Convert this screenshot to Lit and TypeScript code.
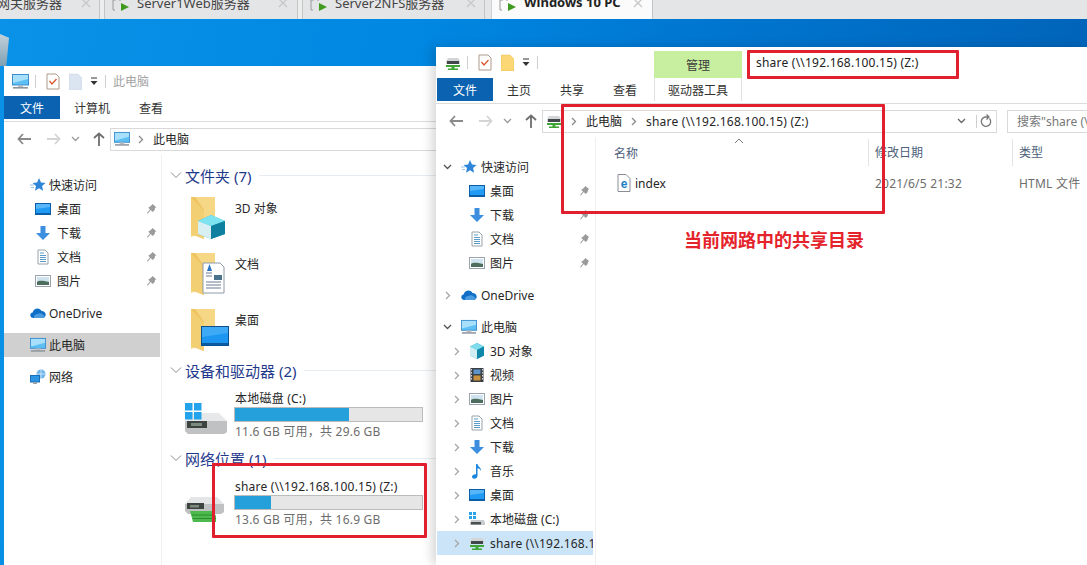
import { LitElement, html, css, svg, nothing } from "lit";
import { customElement } from "lit/decorators.js";

const ic = (w: number, h: number, body: unknown, vb = `0 0 ${w} ${h}`) =>
  html`<svg class="ico" width=${w} height=${h} viewBox=${vb}>${body}</svg>`;

const pc = (s = 17) => ic(s, s, svg`
  <rect x="0.5" y="1.5" width="16" height="10.5" fill="#5cc0f5" stroke="#3f8fcf"/>
  <path d="M1 2h15v4L1 10z" fill="#a8e0fb"/>
  <rect x="6" y="12" width="5" height="2" fill="#b5bcc4"/>
  <rect x="1" y="14" width="15" height="1.6" fill="#8d959d"/>`, "0 0 17 17");

const desk = () => ic(16, 16, svg`
  <rect x="0.5" y="2.5" width="15" height="11" fill="#1f9bf3" stroke="#0a5ea8"/>
  <rect x="1" y="12" width="14" height="1.5" fill="#0b5fa8"/>
  <path d="M1 3h14v3L1 8z" fill="#57b6f8"/>`);

const down = () => ic(16, 16, svg`<path d="M5.5 1h5v7H15l-7 7-7-7h4.500z" fill="#3d8ede"/>`);

const doc = () => ic(16, 16, svg`
  <path d="M3 1h7l3 3v11H3z" fill="#fff" stroke="#98a2ac"/>
  <path d="M5 4h4M5 6.500h6M5 8.500h6M5 10.500h6M5 12.500h6" stroke="#5a9bc9" stroke-width="1"/>`);

const pics = () => ic(16, 16, svg`
  <rect x="0.500" y="2.500" width="15" height="11" fill="#fff" stroke="#9aa3ab"/>
  <rect x="2" y="4" width="12" height="8" fill="#cfe3ee"/>
  <path d="M2 9c3-2 6-1 12 0v3H2z" fill="#4d6d5e"/>`);

const star = () => ic(16, 16, svg`
  <path d="M9 1l2 4.600 4.500.4-3.400 3 1 4.700L9 11.200 5 13.700l1-4.700-3.400-3 4.500-.4z" fill="#2f86d8"/>
  <path d="M0 8h4M1 10.500h3" stroke="#9cc4e6"/>`);

const cloud = () => ic(16, 16, svg`
  <path d="M3.500 13C1.500 13 .3 11.700.3 10.200c0-1.500 1-2.500 2.300-2.700C3.300 5 5.300 3.500 7.500 3.500c1.800 0 3.300 1 4 2.600 2.300 0 4.200 1.600 4.200 3.700 0 1.800-1.300 3.200-3.200 3.200z" fill="#0f6fc6"/>
  <path d="M4 13c-.5-2 1-4 3.500-4 1.500-1.500 5-1 6 1.200l1.500 1c-.5 1.100-1.500 1.800-3 1.800z" fill="#4a9be0"/>`);

const net = () => ic(16, 16, svg`
  <circle cx="11" cy="5" r="4.500" fill="#6fb4e8"/>
  <path d="M7 5h8M11 .5v9" stroke="#d8ecfa" stroke-width=".8"/>
  <rect x=".5" y="6.500" width="9" height="6.500" fill="#2c96e6" stroke="#1d6fb5"/>
  <rect x="3" y="13" width="4" height="2" fill="#9aa3ab"/>`);

const cube = () => ic(16, 16, svg`
  <path d="M8 0l7 3.500v9L8 16l-7-3.500v-9z" fill="#21a9c4"/>
  <path d="M8 0l7 3.500L8 7 1 3.500z" fill="#7fdcec"/>
  <path d="M1 3.500L8 7v9l-7-3.500z" fill="#cfeef3"/>
  <path d="M15 3.500V12.500L8 16V7z" fill="#0f87a8"/>`);

const video = () => ic(16, 16, svg`
  <rect x="1.500" y="1" width="13" height="14" fill="#3a3f45"/>
  <rect x="4.500" y="2.500" width="7" height="4.500" fill="#5c93c9"/>
  <rect x="4.500" y="8.500" width="7" height="5" fill="#c9913e"/>
  <path d="M2.500 2v12M13.500 2v12" stroke="#d8d8d8" stroke-dasharray="1.500 1.500"/>`);

const music = () => ic(16, 16, svg`
  <path d="M7 1h1.500c.3 3 4 3.500 3.500 7-.5-1.500-2-2.500-3.500-2.700V13c0 1.500-1.500 2.700-3.200 2.700C4 15.700 3 15 3 13.800 3 12.300 5 11 7 11.300z" fill="#1b86dd"/>`);

const smallDisk = () => ic(16, 16, svg`
  <rect x="0" y="1" width="3" height="3" fill="#2aa3e8"/><rect x="4" y="1" width="3" height="3" fill="#2aa3e8"/>
  <rect x="0" y="5" width="3" height="3" fill="#2aa3e8"/><rect x="4" y="5" width="3" height="3" fill="#2aa3e8"/>
  <path d="M2 9h13l1 3v2H1v-2z" fill="#c9ccce"/>
  <rect x="2" y="11" width="10" height="2.500" fill="#4a4f4f"/>`);

const smallNet = () => ic(16, 16, svg`
  <path d="M3 3h10l2 3v3H1V6z" fill="#d3d5d6"/>
  <rect x="2" y="6" width="12" height="3" fill="#41474a"/>
  <path d="M1 10h14v2H9.500v1.500H13V15H3v-1.500h3.500V12H1z" fill="#3fa535"/>`);

const pin = () => ic(10, 12, svg`
  <path d="M5.500 1l3.700 3.300-1.200.6-.4 2.400L5.500 9 3.800 7.100.8 10.500 0 10l3-3.500-1.800-1.800 2-1.100.8-.8z" fill="#9b9b9b"/>`);

const folderBack = svg`
  <path d="M1 0h24v32L1 40z" fill="#f6d785"/>
  <path d="M1 0h4l9 13v29L1 37z" fill="#eec25e"/>
  <path d="M1 37l13 5V14L1 0z" fill="#f3cf73"/>`;

const folder3d = () => ic(36, 42, svg`${folderBack}
  <path d="M21 18l14 6v13l-14 5-13-5V24z" fill="#2cb5ce"/>
  <path d="M21 18l14 6-14 5-13-5z" fill="#7ee3f0"/>
  <path d="M8 24l13 5v13L8 37z" fill="#d7eff2"/>
  <path d="M21 29l14-5v13l-14 5z" fill="#0f7f9f"/>`);

const folderDoc = () => ic(36, 42, svg`${folderBack}
  <path d="M13 10h17l4 4v26H13z" fill="#fff" stroke="#8d9aa7"/>
  <path d="M16 20h6M16 23h6M16 29h15M16 32h15M16 35h15" stroke="#6a7d90"/>
  <path d="M17 18l2.500-7 2.500 7z" fill="#2a73c7"/>
  <rect x="24" y="22" width="8" height="5" fill="#49738a"/>`);

const folderDesk = () => ic(40, 42, svg`${folderBack}
  <rect x="11.500" y="17.500" width="27" height="19" fill="#1c96f1" stroke="#0c4f8c"/>
  <path d="M12 18h26v6l-26 4z" fill="#3eaaf6"/>
  <rect x="12" y="34" width="26" height="2.500" fill="#0b5aa0"/>`);

const driveC = () => ic(44, 33, svg`
  <path d="M9 10h26l8 8v11l-3 2H4l-3-3V18z" fill="#e6e8e9"/>
  <path d="M1 18h42v11l-3 2H4l-3-3z" fill="#bfc1c2"/>
  <rect x="3" y="18" width="20" height="7" fill="#3d4440"/>
  <rect x="7" y="20" width="11" height="3" fill="#7c8a80"/>
  <rect x="1" y="0" width="7.500" height="7.500" fill="#23a3ec"/><rect x="10" y="0" width="7.500" height="7.500" fill="#23a3ec"/>
  <rect x="1" y="9" width="7.500" height="7.500" fill="#23a3ec"/><rect x="10" y="9" width="7.500" height="7.500" fill="#23a3ec"/>`);

const driveZ = () => ic(44, 30, svg`
  <path d="M7 2h26l7 7v8l-3 2H4l-3-3V9z" fill="#e3e5e6"/>
  <path d="M1 9h39v8l-3 2H4l-3-3z" fill="#bfc1c2"/>
  <rect x="3" y="8" width="17" height="6" fill="#3d4440"/>
  <rect x="6" y="10" width="9" height="2.500" fill="#7c8a80"/>
  <path d="M6 16h23l3 5v6H9z" fill="#4cba4c"/>
  <path d="M8 20h23M9 23.500h23" stroke="#2f8d2f"/>`);

const arrowL = (c = "#8a8a8a") => ic(14, 12, svg`<path d="M6 1L1.500 6 6 11M2 6h12" fill="none" stroke=${c} stroke-width="1.800"/>`);
const arrowR = (c = "#d4d4d4") => ic(14, 12, svg`<path d="M8 1l4.500 5L8 11M12 6H0" fill="none" stroke=${c} stroke-width="1.800"/>`);
const arrowU = () => ic(12, 14, svg`<path d="M1 6l5-4.500L11 6M6 2v12" fill="none" stroke="#6e6e6e" stroke-width="1.800"/>`);
const chevD = (c = "#8a8a8a") => ic(9, 6, svg`<path d="M1 1l3.500 3.500L8 1" fill="none" stroke=${c} stroke-width="1.300"/>`);
const chevD2 = () => ic(12, 8, svg`<path d="M1 1.500l5 5 5-5" fill="none" stroke="#8a8f96" stroke-width="1"/>`);
const chevR = (c = "#a6a6a6") => ic(6, 9, svg`<path d="M1 1l3.500 3.500L1 8" fill="none" stroke=${c} stroke-width="1.300"/>`);
const chevU = () => ic(10, 6, svg`<path d="M1 5l4-4 4 4" fill="none" stroke="#7b7b7b"/>`);
const qatDrop = () => ic(8, 9, svg`<path d="M1 1h6" stroke="#333"/><path d="M0.500 4h7L4 8z" fill="#333"/>`);
const check = () => ic(14, 17, svg`
  <path d="M1 1h9l3 3v12H1z" fill="#fff" stroke="#b09a8a"/>
  <path d="M3.500 8l2.500 3 4.500-5" fill="none" stroke="#d9552b" stroke-width="1.300"/>`);
const blank = (c: string, e: string) => ic(13, 17, svg`<path d="M0 1h9l4 4v12H0z" fill=${c} stroke=${e} stroke-width=".5"/>`);
const refresh = () => ic(12, 14, svg`<path d="M9.500 4.500A4.700 4.700 0 1 1 5 3h3M6.500.5L9 3 6.500 5.500" fill="none" stroke="#777" stroke-width="1.300"/>`);
const ieFile = () => ic(14, 18, svg`
  <path d="M1 .5h8l4 4v13H1z" fill="#fff" stroke="#8a8f96"/>
  <text x="7" y="13.500" text-anchor="middle" class="ie">e</text>`);
const tabPlay = () => ic(18, 12, svg`
  <path d="M4 0H1v10h2M7 0h2" fill="none" stroke="#9a9a9a"/>
  <path d="M9 3l8 4-8 4z" fill="#3f9a1f"/>`);
const closeX = (c = "#c9c9c9") => ic(10, 10, svg`<path d="M1 1l8 8M9 1L1 9" stroke=${c} stroke-width="1.400"/>`);

interface Row { ch?: "d" | "r"; icon: () => unknown; label: string; pin?: boolean; sub?: boolean; gap?: boolean; sel?: boolean; }

const quick = (ch: boolean): Row[] => [
  { ch: ch ? "d" : undefined, icon: star, label: "快速访问" },
  { icon: desk, label: "桌面", pin: true, sub: true },
  { icon: down, label: "下载", pin: true, sub: true },
  { icon: doc, label: "文档", pin: true, sub: true },
  { icon: pics, label: "图片", pin: true, sub: true },
];

const leftRows: Row[] = [
  ...quick(false),
  { icon: cloud, label: "OneDrive", gap: true },
  { icon: () => pc(16), label: "此电脑", gap: true, sel: true },
  { icon: net, label: "网络", gap: true },
];

const rightRows: Row[] = [
  ...quick(true),
  { ch: "r", icon: cloud, label: "OneDrive", gap: true },
  { ch: "d", icon: () => pc(16), label: "此电脑", gap: true },
  { ch: "r", icon: cube, label: "3D 对象", sub: true },
  { ch: "r", icon: video, label: "视频", sub: true },
  { ch: "r", icon: pics, label: "图片", sub: true },
  { ch: "r", icon: doc, label: "文档", sub: true },
  { ch: "r", icon: down, label: "下载", sub: true },
  { ch: "r", icon: music, label: "音乐", sub: true },
  { ch: "r", icon: desk, label: "桌面", sub: true },
  { ch: "r", icon: smallDisk, label: "本地磁盘 (C:)", sub: true },
  { ch: "r", icon: smallNet, label: "share (\\\\192.168.100.15) (Z:)", sub: true, sel: true },
];

@customElement("app-root")
export class AppRoot extends LitElement {
  static styles = css`
    :host { display: block; width: 1087px; height: 565px; font-family: "Noto Sans", "Noto Sans CJK SC", sans-serif; font-size: 12px; color: #262626; }
    .page { position: relative; width: 1087px; height: 565px; overflow: hidden; display: flex; flex-direction: column; background: #fff; }
    .ico { display: block; flex: none; }
    .ie { font: 700 12px "Liberation Sans", sans-serif; fill: #1c80c8; }
    .ls { letter-spacing: .22px; }

    .tabs { height: 19px; flex: none; background: #e4e5e7; display: flex; overflow: hidden; }
    .tab { height: 19px; display: flex; align-items: center; box-sizing: border-box; border-right: 1px solid #c4c4c4; font-size: 13px; color: #444; flex: none; position: relative; }
    .tab .t { margin-top: -15px; white-space: nowrap; }
    .tab .x { position: absolute; top: -2px; }
    .tab .p { margin: -8px 7px 0 7px; }
    .tab.first { width: 100px; }
    .tab.first .t { margin-left: -3px; }
    .sep { width: 5px; flex: none; background: #eceded; border-right: 1px solid #c4c4c4; box-sizing: border-box; }
    .tab.t2 { width: 193px; }
    .tab.t3 { width: 182px; }
    .tab.act { width: 162px; margin-left: 6px; background: #fbfbfb; font-weight: 700; color: #222; border-left: 1px solid #d0d0d0; }

    .desktop { flex: 1; position: relative; background: linear-gradient(100deg, #0a92e8 0%, #0088e2 35%, #0076d0 60%, #0060b4 100%); }
    .bin { position: absolute; left: 0; top: 15px; width: 9px; height: 32px; background: linear-gradient(#c3d2da, #7fa0b4); clip-path: polygon(0 0, 100% 12%, 70% 100%, 0 100%); }

    .win { position: absolute; background: #fff; display: flex; flex-direction: column; }
    .w1 { left: 4px; top: 47px; width: 432px; height: 499px; }
    .w2 { left: 436px; top: 28px; width: 651px; height: 518px; box-shadow: -4px 0 10px rgba(0,0,0,.16); }

    .title { display: flex; align-items: center; flex: none; position: relative; }
    .w1 .title { height: 30px; }
    .w2 .title { height: 31px; }
    .q { display: flex; align-items: center; }
    .w1 .q { padding-left: 8px; }
    .w2 .q { padding-left: 9px; }
    .bar { width: 1px; height: 13px; background: #cfcfcf; margin: 0 10px 0 6px; }
    .bar.e { margin: 0 0 0 7px; }
    .dropq { margin-left: 8px; }
    .blankq { margin-left: 9px; }
    .wt { margin-left: 7px; color: #a3a3a3; }
    .manage { align-self: flex-end; margin-left: 116px; width: 88px; height: 27px; background: #c8efa0; display: flex; align-items: center; justify-content: center; color: #3c3c3c; }
    .st { margin-left: 14px; margin-top: -1px; color: #222; }

    .rib { display: flex; height: 23px; flex: none; align-items: stretch; }
    .file { width: 56px; background: #0a62b0; color: #fff; display: flex; align-items: center; justify-content: center; margin-right: 14px; }
    .w2 .file { margin-left: 1px; }
    .rt { display: flex; align-items: center; margin-right: 29px; color: #333; }
    .dt { display: flex; align-items: center; justify-content: center; width: 88px; margin-left: -12px; color: #333; border-left: 1px solid #e1e1e1; border-right: 1px solid #e1e1e1; box-sizing: border-box; }
    .line { height: 3px; flex: none; border-bottom: 1px solid #dcdcdc; box-sizing: border-box; }

    .tool { height: 33px; flex: none; display: flex; align-items: center; box-sizing: border-box; padding-top: 1px; }
    .nb { display: flex; justify-content: center; align-items: center; flex: none; }
    .nb.a { width: 40px; } .nb.b { width: 20px; } .nb.c { width: 23px; } .nb.d { width: 23px; }
    .addr { flex: 1; min-width: 0; height: 23px; border: 1px solid #d9d9d9; display: flex; align-items: center; box-sizing: border-box; padding-left: 3px; white-space: nowrap; border-right: 0; }
    .w2 .addr { flex: none; width: 455px; border-right: 1px solid #d9d9d9; padding-right: 4px; }
    .w1 .addr > svg:nth-child(2) { margin: 0 9px 0 8px; }
    .crumbs { display: flex; align-items: center; gap: 9px; flex: 1; min-width: 0; }
    .ctl { display: flex; align-items: center; gap: 3px; flex: none; }
    .search { flex: 1; height: 23px; margin-left: 10px; border: 1px solid #d9d9d9; border-right: 0; display: flex; align-items: center; padding-left: 9px; color: #777; box-sizing: border-box; overflow: hidden; white-space: nowrap; }

    .body { flex: 1; display: flex; min-height: 0; }
    .side { flex: none; padding-top: 18px; box-sizing: border-box; border-right: 1px solid #f0f0f0; }
    .w1 .side { width: 158px; }
    .w2 .side { width: 160px; }
    .row { height: 24px; display: flex; align-items: center; position: relative; white-space: nowrap; overflow: hidden; }
    .row.gap { margin-top: 8px; }
    .row.sel { background: #d0d0d0; }
    .w1 .row { width: 156px; }
    .w2 .row { width: 156px; margin-left: 1px; }
    .w2 .row.gap { margin-top: 8px; }
    .w2 .row.sel { background: #cce4f7; letter-spacing: .22px; }
    .row .chev { flex: none; width: 11px; display: flex; justify-content: center; }
    .w1 .row .ri { margin-left: 26px; margin-right: 3px; }
    .w1 .row.sub .ri { margin-left: 31px; margin-right: 6px; }
    .w2 .row .chev { margin-left: 5px; }
    .w2 .row .ri { margin-left: 8px; margin-right: 4px; }
    .w2 .row.sub .chev { margin-left: 14px; }
    .w2 .row.sub .ri { margin-left: 7px; margin-right: 5px; }
    .row .rp { position: absolute; right: 3px; top: 6px; }

    .main { flex: 1; min-width: 0; padding-top: 8px; padding-left: 8px; }
    .gh { height: 24px; display: flex; align-items: center; color: #1f3a8c; font-size: 15px; }
    .gh .gc { margin-right: 2px; width: 13px; display: flex; }
    .gh .gl { flex: 1; height: 1px; background: #e6ecf2; margin-left: 8px; }
    .fos { margin: 2px 0 1px; }
    .fo { height: 56px; display: flex; box-sizing: border-box; padding: 8px 0 0 20px; }
    .fo .fi { width: 45px; flex: none; }
    .fo .ft { margin-top: 2px; }
    .dr { height: 64px; display: flex; padding-left: 14px; box-sizing: border-box; }
    .dr .di { width: 50px; flex: none; padding-top: 21px; }
    .dr .di.z { padding-top: 25px; }
    .dr .dc { width: 189px; padding-top: 8px; }
    .dr .dn { height: 17px; line-height: 17px; white-space: nowrap; padding-left: 1px; }
    .meter { height: 15px; background: #e6e6e6; border: 1px solid #bcbcbc; box-sizing: border-box; margin-top: 0; }
    .meter div { height: 100%; background: #26a0da; }
    .ds { height: 17px; line-height: 17px; margin-top: 1px; color: #6d6d6d; white-space: nowrap; padding-left: 1px; }

    .list { flex: 1; min-width: 0; padding-top: 2px; position: relative; }
    .heads { height: 27px; display: flex; align-items: center; color: #4c607a; position: relative; }
    .hc { box-sizing: border-box; flex: none; }
    .c1 { width: 272px; padding-left: 18px; }
    .c2 { width: 144px; padding-left: 6px; border-left: 1px solid #e4e4e4; height: 27px; line-height: 27px; }
    .c3 { padding-left: 6px; border-left: 1px solid #e4e4e4; height: 27px; line-height: 27px; width: 75px; }
    .sort { position: absolute; left: 138px; top: -1px; }
    .fr { height: 24px; margin-top: 5px; display: flex; align-items: center; color: #555; }
    .fr .c1 { display: flex; align-items: center; gap: 4px; color: #262626; padding-left: 21px; }
    .fr .c2, .fr .c3 { border: 0; height: auto; line-height: normal; }
    .fr .c2 { padding-left: 7px; color: #6d6d6d; }
    .fr .c3 { padding-left: 7px; color: #6d6d6d; white-space: nowrap; }

    .ann { position: absolute; box-sizing: border-box; border: 3px solid #e0202f; border-radius: 1px; }
    .a1 { left: 747px; top: 50px; width: 212px; height: 29px; }
    .a2 { left: 561px; top: 104px; width: 324px; height: 110px; }
    .a3 { left: 212px; top: 463px; width: 215px; height: 75px; }
    .note { position: absolute; left: 684px; top: 227px; font: 700 18px/24px "Noto Sans CJK SC", sans-serif; color: #e4232b; white-space: nowrap; }
  `;

  private rows(list: Row[]) {
    return list.map(r => html`
      <div class="row ${r.gap ? "gap" : ""} ${r.sub ? "sub" : ""} ${r.sel ? "sel" : ""}">
        ${r.ch ? html`<span class="chev">${r.ch === "d" ? chevD("#555") : chevR()}</span>` : nothing}
        ${r.ch === undefined && list === rightRows ? html`<span class="chev"></span>` : nothing}
        <span class="ri">${r.icon()}</span><span>${r.label}</span>
        ${r.pin ? html`<span class="rp">${pin()}</span>` : nothing}
      </div>`);
  }

  private nav() {
    return html`
      <span class="nb a">${arrowL()}</span><span class="nb b">${arrowR()}</span>
      <span class="nb c">${chevD("#9a9a9a")}</span><span class="nb d">${arrowU()}</span>`;
  }

  private leftWindow() {
    const head = (t: string) => html`<div class="gh"><span class="gc">${chevD2()}</span><span>${t}</span><span class="gl"></span></div>`;
    const fo = (i: unknown, t: string) => html`<div class="fo"><span class="fi">${i}</span><span class="ft">${t}</span></div>`;
    const dr = (i: unknown, n: string, pct: number, s: string, z = false) => html`
      <div class="dr"><span class="di ${z ? "z" : ""}">${i}</span>
        <div class="dc"><div class="dn ls">${n}</div>
          <div class="meter"><div style="width:${pct}%"></div></div>
          <div class="ds ls">${s}</div></div></div>`;
    return html`
      <section class="win w1">
        <div class="title"><div class="q">${pc()}<span class="bar"></span>${check()}<span class="blankq">${blank("#dbe5f1", "#c8d4e2")}</span><span class="dropq">${qatDrop()}</span><span class="bar e"></span></div><span class="wt">此电脑</span></div>
        <div class="rib"><span class="file">文件</span><span class="rt">计算机</span><span class="rt">查看</span></div>
        <div class="line"></div>
        <div class="tool">${this.nav()}<div class="addr">${pc(16)}${chevR("#8a8a8a")}<span>此电脑</span></div></div>
        <div class="body">
          <div class="side">${this.rows(leftRows)}</div>
          <div class="main">
            ${head("文件夹 (7)")}
            <div class="fos">${fo(folder3d(), "3D 对象")}${fo(folderDoc(), "文档")}${fo(folderDesk(), "桌面")}</div>
            ${head("设备和驱动器 (2)")}
            ${dr(driveC(), "本地磁盘 (C:)", 61, "11.6 GB 可用，共 29.6 GB")}
            ${head("网络位置 (1)")}
            ${dr(driveZ(), "share (\\\\192.168.100.15) (Z:)", 19, "13.6 GB 可用，共 16.9 GB", true)}
          </div>
        </div>
      </section>`;
  }

  private rightWindow() {
    return html`
      <section class="win w2">
        <div class="title"><div class="q">${smallNet()}<span class="bar"></span>${check()}<span class="blankq">${blank("#fbd873", "#e6bd55")}</span><span class="dropq">${qatDrop()}</span><span class="bar e"></span></div><span class="manage">管理</span><span class="st ls">share (\\\\192.168.100.15) (Z:)</span></div>
        <div class="rib"><span class="file">文件</span><span class="rt">主页</span><span class="rt">共享</span><span class="rt">查看</span><span class="dt">驱动器工具</span></div>
        <div class="line"></div>
        <div class="tool">${this.nav()}
          <div class="addr"><div class="crumbs">${smallNet()}${chevR("#8a8a8a")}<span>此电脑</span>${chevR("#8a8a8a")}<span class="ls">share (\\\\192.168.100.15) (Z:)</span></div><div class="ctl">${chevD("#666")}<span class="bar e"></span>${refresh()}</div></div>
          <div class="search">搜索"share (\\\\192.168.100.15) (Z:)"</div>
        </div>
        <div class="body">
          <div class="side">${this.rows(rightRows)}</div>
          <div class="list">
            <div class="heads"><span class="sort">${chevU()}</span><span class="hc c1">名称</span><span class="hc c2">修改日期</span><span class="hc c3">类型</span></div>
            <div class="fr"><span class="hc c1">${ieFile()}index</span><span class="hc c2 ls">2021/6/5 21:32</span><span class="hc c3 ls">HTML 文件</span></div>
          </div>
        </div>
      </section>`;
  }

  render() {
    return html`
      <div class="page">
        <header class="tabs">
          <div class="tab first"><span class="t">网关服务器</span><span class="x" style="left:81px">${closeX()}</span></div><span class="sep"></span>
          <div class="tab t2"><span class="p">${tabPlay()}</span><span class="t">Server1Web服务器</span><span class="x" style="left:173px">${closeX()}</span></div><span class="sep"></span>
          <div class="tab t3"><span class="p">${tabPlay()}</span><span class="t">Server2NFS服务器</span><span class="x" style="left:163px">${closeX()}</span></div>
          <div class="tab act"><span class="p">${tabPlay()}</span><span class="t">Windows 10 PC</span><span class="x" style="left:141px">${closeX()}</span></div>
        </header>
        <div class="desktop">
          <div class="bin"></div>
          ${this.leftWindow()}
          ${this.rightWindow()}
        </div>
        <div class="ann a1"></div><div class="ann a2"></div><div class="ann a3"></div>
        <div class="note">当前网路中的共享目录</div>
      </div>`;
  }
}
